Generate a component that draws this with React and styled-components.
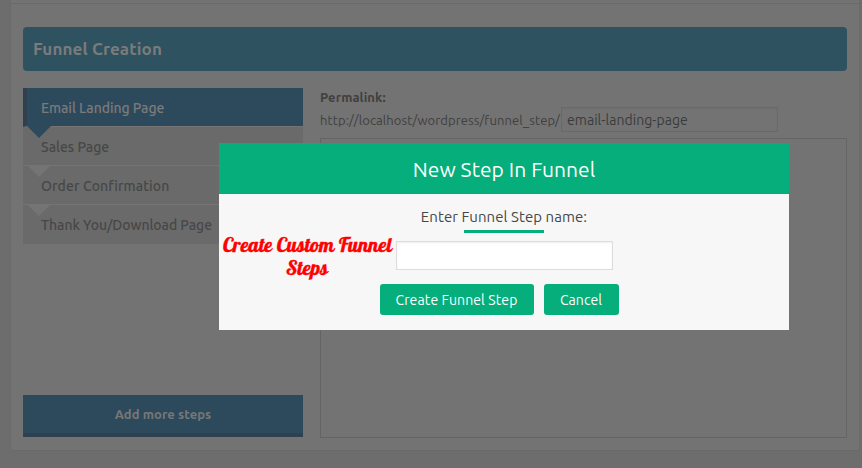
import React from 'react';
import styled, { createGlobalStyle } from 'styled-components';

const GlobalStyle = createGlobalStyle`
  * { box-sizing: border-box; }
  body { margin: 0; background: #6d6d6d; overflow: hidden; font-family: Ubuntu, "Noto Sans", sans-serif; }
`;

const Page = styled.div`
  position: relative;
  width: 862px;
  height: 468px;
  padding: 0 2px 0 10px;
  overflow: hidden;
`;
const PanelTop = styled.header`
  height: 3px;
  background: #737373;
  border-left: 1px solid #6c6c6c;
  border-right: 1px solid #6c6c6c;
`;
const Panel = styled.main`
  height: 448px;
  padding: 23px 12px 0;
  background: #737373;
  border: 1px solid #6a6a6a;
`;
const Label = styled.span`
  display: inline-block;
  white-space: nowrap;
  letter-spacing: ${p => p.$spacing || 0}px;
`;
const Banner = styled.h1`
  display: flex;
  align-items: center;
  height: 44px;
  margin: 0;
  padding: 0 10px 2px;
  border-radius: 4px;
  background: #2f5261;
  color: #7b7b7b;
  font-size: 17px;
  font-weight: 700;
`;
const Columns = styled.div`
  display: flex;
  gap: 17px;
  margin-top: 17px;
`;
const Sidebar = styled.div`
  display: flex;
  flex-direction: column;
  justify-content: space-between;
  flex: none;
  width: 280px;
  height: 349px;
`;
const StepList = styled.nav`
  display: flex;
  flex-direction: column;
`;
const Step = styled.a`
  position: relative;
  display: flex;
  align-items: center;
  height: 39px;
  padding-top: 1px;
  padding-left: ${p => (p.$active ? 14 : 18)}px;
  border-left: ${p => (p.$active ? '4px solid #2f404e' : '0')};
  border-bottom: 1px solid ${p => (p.$last ? '#6a6a6a' : '#747474')};
  background: ${p => (p.$active ? '#2d4a5c' : '#6a6a6a')};
  color: ${p => (p.$active ? '#7b7b7b' : '#474747')};
  font-size: 14px;
  font-weight: 500;
`;
const Pointer = styled.svg`
  position: absolute;
  z-index: 1;
  top: 38px;
  left: ${p => (p.$active ? 0 : 4)}px;
  width: 24px;
  height: 12px;
  fill: ${p => (p.$active ? '#2d4a5c' : '#747474')};
`;
const AddButton = styled.button`
  height: 42px;
  padding: 0;
  border: 0;
  border-bottom: 4px solid #2f404e;
  background: #2d4a5c;
  color: #777;
  font: 700 13px Ubuntu, "Noto Sans", sans-serif;
`;
const Editor = styled.section`
  display: flex;
  flex-direction: column;
  flex: none;
  width: 527px;
  height: 350px;
  color: #404040;
`;
const PermalinkTitle = styled.div`
  height: 19px;
  font-size: 13px;
  line-height: 19px;
  font-weight: 700;
`;
const PermalinkRow = styled.label`
  display: flex;
  align-items: center;
  height: 25px;
  font-size: 13px;
`;
const Url = styled.span`
  width: 241px;
  white-space: nowrap;
`;
const Slug = styled.span`
  display: flex;
  align-items: center;
  width: 217px;
  height: 25px;
  padding-left: 5px;
  border: 1px solid #696969;
  box-shadow: inset 0 1px 2px rgba(0,0,0,.04);
  color: #3b3b3b;
  font-size: 14px;
`;
const Canvas = styled.div`
  flex: 1;
  margin-top: 6px;
  border: 1px solid #646464;
`;
const Dialog = styled.section`
  position: absolute;
  z-index: 3;
  top: 143px;
  left: 219px;
  width: 570px;
  height: 187px;
  background: #f7f7f7;
  color: #474747;
`;
const DialogTitle = styled.h2`
  display: flex;
  align-items: center;
  justify-content: center;
  height: 51px;
  margin: 0;
  background: #05ae7a;
  color: #fff;
  font-size: 21px;
  font-weight: 400;
`;
const DialogBody = styled.div`
  display: flex;
  flex-direction: column;
  align-items: center;
`;
const Prompt = styled.label`
  display: flex;
  flex-direction: column;
  align-items: center;
  height: 39px;
  padding-top: 13px;
  font-size: 15px;
  line-height: 20px;
`;
const Underline = styled.span`
  width: 80px;
  height: 3px;
  margin-top: 3px;
  background: #05ae7a;
`;
const NameInput = styled.input`
  width: 217px;
  height: 29px;
  margin-top: 8px;
  border: 1px solid #ddd;
  background: #fff;
  box-shadow: inset 0 1px 2px rgba(0,0,0,.07);
  outline: 0;
`;
const Actions = styled.div`
  display: flex;
  gap: 10px;
  margin: 14px 10px 0 0;
`;
const Button = styled.button`
  width: ${p => p.$width}px;
  height: 31px;
  padding: 0;
  border: 0;
  border-radius: 3px;
  background: #05ae7a;
  color: #fff;
  font: 400 14px Ubuntu, "Noto Sans", sans-serif;
`;
const Annotation = styled.div`
  position: absolute;
  top: 90px;
  left: 4px;
  width: 168px;
  color: #f00;
  font: 400 20px/23px Lobster, "Liberation Serif", serif;
  letter-spacing: 0.12px;
  -webkit-text-stroke: 0.4px #f00;
  text-align: center;
`;
const Script = styled.span`
  display: block;
  white-space: nowrap;
`;

const steps = [
  { name: 'Email Landing Page', spacing: -0.06 },
  { name: 'Sales Page', spacing: 0 },
  { name: 'Order Confirmation', spacing: 0.1 },
  { name: 'Thank You/Download Page', spacing: -0.04 },
];

export default function App() {
  return (
    <Page>
      <GlobalStyle />
      <PanelTop />
      <Panel>
        <Banner><Label $spacing={0.13}>Funnel Creation</Label></Banner>
        <Columns>
          <Sidebar>
            <StepList>
              {steps.map((step, i) => (
                <Step key={step.name} $active={i === 0} $last={i === 3}>
                  <Label $spacing={step.spacing}>{step.name}</Label>
                  {i < 3 && <Pointer $active={i === 0} viewBox="0 0 24 12"><path d="M0 0H24L12 12Z" /></Pointer>}
                </Step>
              ))}
            </StepList>
            <AddButton><Label $spacing={0.08}>Add more steps</Label></AddButton>
          </Sidebar>
          <Editor>
            <PermalinkTitle><Label $spacing={0.1}>Permalink:</Label></PermalinkTitle>
            <PermalinkRow>
              <Url><Label $spacing={0.1}>http://localhost/wordpress/funnel_step/</Label></Url>
              <Slug><Label $spacing={0.05}>email-landing-page</Label></Slug>
            </PermalinkRow>
            <Canvas />
          </Editor>
        </Columns>
      </Panel>
      <Dialog role="dialog">
        <DialogTitle><Label $spacing={0.06}>New Step In Funnel</Label></DialogTitle>
        <DialogBody>
          <Prompt><Label $spacing={0.07}>Enter Funnel Step name:</Label><Underline /></Prompt>
          <NameInput />
          <Actions>
            <Button $width={154}><Label $spacing={0.13}>Create Funnel Step</Label></Button>
            <Button $width={75}><Label $spacing={0.1}>Cancel</Label></Button>
          </Actions>
        </DialogBody>
        <Annotation>
          <Script>Create Custom Funnel</Script>
          <Script>Steps</Script>
        </Annotation>
      </Dialog>
    </Page>
  );
}
